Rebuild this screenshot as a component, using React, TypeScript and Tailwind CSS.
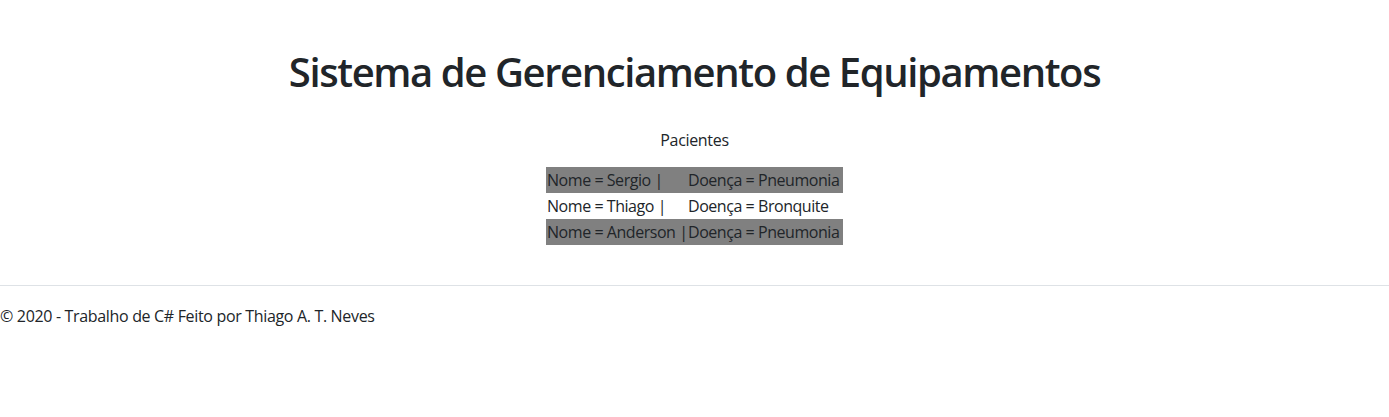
export default function App() {
  const pacientes = [
    { nome: "Sergio", doenca: "Pneumonia" },
    { nome: "Thiago", doenca: "Bronquite" },
    { nome: "Anderson", doenca: "Pneumonia" },
  ];

  return (
    <div className="min-h-[417px] bg-white text-[#212529] font-['Open_Sans',sans-serif] text-[16px] leading-6 tracking-[-0.33px]">
      <main className="pt-12 pb-10 text-center">
        <h1 className="text-[40px] leading-[48px] font-semibold tracking-[-1.4px] mb-8">Sistema de Gerenciamento de Equipamentos</h1>
        <p className="mb-[15px]">Pacientes</p>
        <table className="mx-auto border-collapse text-left table-fixed w-[297px] tracking-[-0.45px]">
          <tbody>
            {pacientes.map((p, i) => (
              <tr key={p.nome} className={i % 2 === 0 ? "bg-[#808080] h-[26px]" : "h-[26px]"}>
                <td className="w-[141px] pl-px pr-0 whitespace-nowrap">Nome = {p.nome} |</td>
                <td className="w-[156px] pl-px pr-0 whitespace-nowrap">Doença = {p.doenca}</td>
              </tr>
            ))}
          </tbody>
        </table>
      </main>
      {/* Rodapé */}
      <footer className="border-t border-[#dee2e6] leading-[60px] whitespace-nowrap">
        © 2020 - Trabalho de C# Feito por Thiago A. T. Neves
      </footer>
    </div>
  );
}
